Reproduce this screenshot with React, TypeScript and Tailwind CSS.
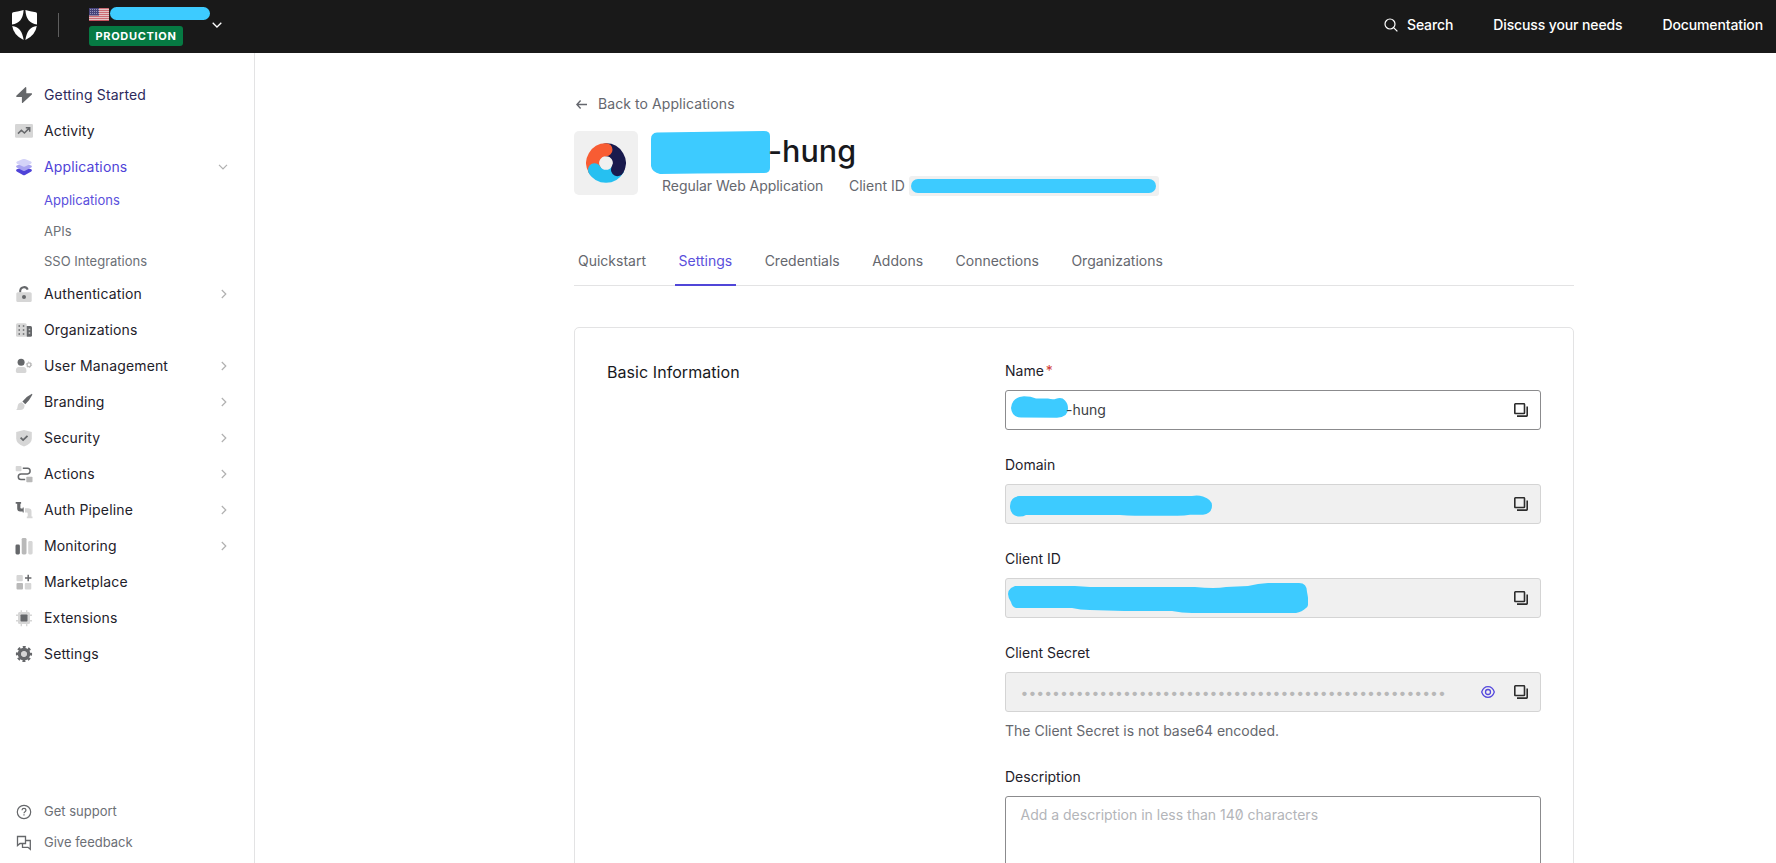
import React from "react";

type IconName =
  | "bolt" | "activity" | "layers" | "lock" | "org" | "user" | "brush" | "shield"
  | "actions" | "pipe" | "bars" | "market" | "chip" | "gear";

const D = "#65676a";
const L = "#d6d6d6";
const M = "#b9b9b9";

const glyphs: Record<IconName, React.ReactNode> = {
  bolt: (
    <path d="M10.300 1.300 1.300 9.700Q.7 10.900 2 10.900h4.900v5.500q.2.900 1 .4l9-8.400q.6-1.200-.6-1.200h-5V1.700q-.2-.900-1-.4z" fill={D} />
  ),
  activity: (
    <>
      <rect x="0" y="2" width="18" height="13.700" rx="1.300" fill={L} />
      <path d="M3 11.600 6.400 8.200 9.400 11 14 6.400M10.800 5.800h3.900v3.900" fill="none" stroke={D} strokeWidth="1.500" />
    </>
  ),
  layers: (
    <>
      <path d="M1.700 11.300 9 9l7.300 2.300q1.400 1 0 2.200L10 16.900q-1 .5-2 0l-6.300-3.400q-1.400-1.200 0-2.200z" fill="#4f43d8" />
      <path d="M1.700 7.400 9 5l7.300 2.400q1.400 1 0 2.100L10 12.700q-1 .5-2 0L1.700 9.500q-1.400-1.100 0-2.100z" fill="#a9a4f0" />
      <path d="M2 3.500 8 1.100q1-.4 2 0l6 2.400q1.600 1 0 2.200L10 8.600q-1 .5-2 0L2 5.700q-1.600-1.200 0-2.200z" fill="#d4d3f8" />
    </>
  ),
  lock: (
    <>
      <path d="M5.200 7.500V5.600a3.900 3.900 0 0 1 7.500-1" fill="none" stroke={D} strokeWidth="2" />
      <rect x="1.300" y="7.300" width="15.400" height="9.700" rx="1.500" fill={L} />
      <circle cx="9" cy="12" r="2" fill={D} />
    </>
  ),
  org: (
    <>
      <rect x="1" y="2.300" width="10.700" height="13.500" rx="1.500" fill={L} />
      <path d="M3.500 5h1.500M7.800 5h1.500M3.500 9h1.500M7.800 9h1.500M3.500 13h1.500M7.800 13h1.500" stroke={D} strokeWidth="1.400" />
      <path d="M11.700 5h3.800q1.500 0 1.500 1.500v7.800q0 1.500-1.500 1.500h-3.800z" fill={D} />
      <path d="M13.700 8.500h1.500M13.700 12h1.500" stroke="#ccc" strokeWidth="1.400" />
    </>
  ),
  user: (
    <>
      <circle cx="6.100" cy="5.300" r="3.500" fill={D} />
      <path d="M.9 13.500q0-3.500 3-3.500h4.500q3 0 3 3.500v1q0 1.400-1.400 1.400H2.300Q.9 15.900.9 14.500z" fill={L} />
      <circle cx="14" cy="7.700" r="1.900" fill="none" stroke={M} strokeWidth="1.300" />
      <circle cx="14" cy="7.700" r="2.700" fill="none" stroke={M} strokeWidth="1" strokeDasharray="1.200 1.620" />
    </>
  ),
  brush: (
    <>
      <path d="M16.900.8q.7.300.3 1.300-2.400 5-6.900 9.200L7.400 8.500Q11.800 3.200 16.900.8z" fill={D} />
      <path d="M6.700 9.200 9.600 12q.2 5-4.500 5H1q1.500-1 1.600-3.500.3-4 4.100-4.300z" fill={L} />
    </>
  ),
  shield: (
    <>
      <path d="M9 .9 16.800 3v6.500q0 5.500-7.800 7.900-7.800-2.400-7.800-7.900V3z" fill={L} />
      <path d="m5.600 8.700 2.500 2.400 4.400-4.300" fill="none" stroke={D} strokeWidth="1.800" />
    </>
  ),
  actions: (
    <>
      <rect x=".7" y="1" width="5.800" height="5.300" rx=".8" fill={L} />
      <path d="M7.800 3.300h4.700q2.600.1 2.600 2.800t-2.600 2.800H6q-2.700.1-2.700 2.900t2.700 2.800h4.200" fill="none" stroke={D} strokeWidth="1.500" />
      <rect x="11.300" y="11.700" width="6.200" height="5.600" rx=".8" fill={M} />
    </>
  ),
  pipe: (
    <>
      <path d="M.7 1h5.400v1.700h-.7v4q0 .7.700.7h1.600v-.9h1v5h-1v-1H5.200q-3 0-3-3V2.700H.7z" fill={D} />
      <path d="M10 7.300h3.200q3.300 0 3.300 3.300v5h1v1.600h-5.700v-1.600h.9v-3.200q0-.8-.8-.8H10z" fill={L} />
    </>
  ),
  bars: (
    <>
      <rect x=".5" y="7.600" width="4.400" height="9.800" rx="1.400" fill={D} />
      <rect x="6.700" y=".9" width="4.800" height="16.500" rx="1.400" fill={M} />
      <rect x="13.200" y="4" width="4.400" height="13.400" rx="1.400" fill={L} />
    </>
  ),
  market: (
    <>
      <rect x="1.500" y="2" width="6.300" height="6.300" rx="1" fill={L} />
      <rect x="1.500" y="9.900" width="6.500" height="6.500" rx="1" fill={M} />
      <rect x="9.800" y="9.900" width="6.500" height="6.500" rx="1" fill={L} />
      <path d="M13.200 1.800v6.400M10 5h6.400" stroke={D} strokeWidth="1.500" />
    </>
  ),
  chip: (
    <>
      <path d="M6.300 1.200v16M11.700 1.200v16M1 6.200h16M1 11.700h16" stroke={L} strokeWidth="1.400" />
      <rect x="3" y="3" width="12" height="12" rx="1.500" fill={L} />
      <rect x="5.500" y="5.500" width="7" height="7" rx=".8" fill={D} />
    </>
  ),
  gear: (
    <>
      <circle cx="9" cy="9" r="4.500" fill="none" stroke={D} strokeWidth="3.600" />
      <circle cx="9" cy="9" r="7" fill="none" stroke={D} strokeWidth="2.200" strokeDasharray="2.900 2.598" strokeDashoffset="1.450" />
      <circle cx="9" cy="9" r="2.800" fill={L} />
    </>
  ),
};

const Chevron = () => (
  <svg className="h-[10px] w-[6px]" viewBox="0 0 6 10" fill="none" stroke="#b0b0b0" strokeWidth="1.200">
    <path d="m.8 1 4 4-4 4" />
  </svg>
);

const NavItem = ({ icon, label, more, tone = "text-[#1e212a]" }: { icon: IconName; label: string; more?: boolean; tone?: string }) => (
  <a className={`flex h-9 items-center pr-[27px] pl-[15px] text-[14px] tracking-[0.15px] ${tone}`}>
    <svg className="mr-[11px] size-[18px] shrink-0" viewBox="0 0 18 18">{glyphs[icon]}</svg>
    <span className="grow pb-px">{label}</span>
    {more && <Chevron />}
  </a>
);

const CopyIcon = () => (
  <svg className="size-[14px]" viewBox="0 0 14 14" fill="none" stroke="#2c2c2c" strokeWidth="1.600">
    <rect x=".8" y=".8" width="9.700" height="9.700" rx=".6" />
    <path d="M13.200 3.500v9q0 .6-.6.600H3" />
  </svg>
);

const Eye = () => (
  <svg className="mr-[19px] h-[14px] w-[14px]" viewBox="0 0 14 14" fill="none" stroke="#5549dd" strokeWidth="1.300">
    <path d="M.7 7Q2.500 1.700 7 1.700T13.300 7Q11.500 12.300 7 12.300T.7 7z" />
    <circle cx="7" cy="7" r="2.500" />
  </svg>
);

const Field = ({ label, required, disabled, eye, children }: { label: string; required?: boolean; disabled?: boolean; eye?: boolean; children: React.ReactNode }) => (
  <div className="mb-[25px]">
    <div className="flex h-5 items-center gap-[2px] text-[14px] leading-5 text-[#1e212a]">
      {label}
      {required && <span className="text-[#d03c38]">*</span>}
    </div>
    <div className={`mt-[9px] flex h-[40px] items-center rounded-[3px] border pr-[12px] ${disabled ? "border-[#d4d4d4] bg-[#f0f0f0]" : "border-[#8b8b8d] bg-white"}`}>
      <div className="flex h-full grow items-center">{children}</div>
      {eye && <Eye />}
      <CopyIcon />
    </div>
  </div>
);

const tabs = ["Quickstart", "Settings", "Credentials", "Addons", "Connections", "Organizations"];

export default function App() {
  return (
    <div className="flex h-[863px] w-[1776px] flex-col overflow-hidden bg-white font-['Inter','Liberation_Sans',sans-serif] text-[14px]">
      <header className="flex h-[53px] shrink-0 items-center bg-[#191919] pr-[13px] text-white">
        <svg className="mt-[-3px] ml-[12px] h-[30px] w-[25px]" viewBox="0 0 25 30" fill="#fff">
          <path d="M11.600 0Q11 13 0 14.500V3.700Q0 2.500 1.200 2.200 7 1.300 11.600 0z" />
          <path d="M13.400 0Q14 13 25 14.500V3.700q0-1.200-1.200-1.500Q18 1.300 13.400 0z" />
          <path d="M.2 15.900Q10 17 11.600 30 1.500 25 .2 15.900z" />
          <path d="M24.800 15.900Q15 17 13.400 30q10.100-5 11.400-14.100z" />
        </svg>
        <div className="mt-[-4px] ml-[21px] h-6 w-px bg-[#5e5e5e]" />
        <div className="ml-[30px] flex h-[39px] flex-col justify-between">
          <div className="flex h-[13px] items-start">
            <svg className="mt-px h-[13px] w-[20px]" viewBox="0 0 20 13">
              <rect width="20" height="13" rx="1" fill="#e9dede" />
              <path d="M0 .7h20M0 2.700h20M0 4.700h20M0 6.700h20M0 8.700h20M0 10.700h20M0 12.500h20" stroke="#c4525c" strokeWidth="1" />
              <rect width="10" height="7.500" fill="#46437a" />
              <path d="M1 1.500h9M1 3.500h9M1 5.500h9" stroke="#a9a8c8" strokeWidth=".8" strokeDasharray="1 1" />
            </svg>
            <div className="ml-px h-[13px] w-[100px] rounded-full bg-[#3dcbff]" />
          </div>
          <div className="flex h-5 w-[94px] items-center justify-center rounded-[3px] bg-[#067a43] text-[11px] font-bold tracking-[0.700px]">PRODUCTION</div>
        </div>
        <svg className="mt-[-3px] ml-[2px] h-[6px] w-[10px]" viewBox="0 0 10 6" fill="none" stroke="#fff" strokeWidth="1.300">
          <path d="m.7.700 4.300 4.300L9.300.700" />
        </svg>
        <nav className="mt-[-4px] ml-auto flex items-center gap-[40px] text-[14px] font-medium tracking-[-0.120px]">
          <span className="flex items-center gap-[9px]">
            <svg className="size-[14px]" viewBox="0 0 14 14" fill="none" stroke="#fff" strokeWidth="1.200">
              <circle cx="6" cy="6" r="5" />
              <path d="m9.600 9.600 3.800 3.800" />
            </svg>
            Search
          </span>
          <span>Discuss your needs</span>
          <span>Documentation</span>
        </nav>
      </header>
      <div className="flex min-h-0 grow">
        <aside className="flex w-[255px] shrink-0 flex-col border-r border-[#e3e3e4] pt-[24px]">
          <NavItem icon="bolt" label="Getting Started" tone="text-[#2d2a5c]" />
          <NavItem icon="activity" label="Activity" />
          <div className="flex h-9 items-center pr-[26px] pl-[15px] text-[14px] tracking-[0.15px] text-[#4f43d8]">
            <svg className="mr-[11px] size-[18px]" viewBox="0 0 18 18">{glyphs.layers}</svg>
            <span className="grow pb-px">Applications</span>
            <svg className="h-[6px] w-[10px]" viewBox="0 0 10 6" fill="none" stroke="#b0b0b0" strokeWidth="1.200">
              <path d="m1 .8 4 4 4-4" />
            </svg>
          </div>
          <div className="flex h-[91px] flex-col pt-px pl-[44px] text-[13px] text-[#6c6f76]">
            <span className="flex h-[30px] shrink-0 items-center text-[#5a4fdc]">Applications</span>
            <span className="flex h-[31px] shrink-0 items-center">APIs</span>
            <span className="flex h-[30px] shrink-0 items-center">SSO Integrations</span>
          </div>
          <NavItem icon="lock" label="Authentication" more />
          <NavItem icon="org" label="Organizations" />
          <NavItem icon="user" label="User Management" more />
          <NavItem icon="brush" label="Branding" more />
          <NavItem icon="shield" label="Security" more />
          <NavItem icon="actions" label="Actions" more />
          <NavItem icon="pipe" label="Auth Pipeline" more />
          <NavItem icon="bars" label="Monitoring" more />
          <NavItem icon="market" label="Marketplace" />
          <NavItem icon="chip" label="Extensions" />
          <NavItem icon="gear" label="Settings" />
          <div className="mt-auto mb-[5px] flex flex-col pl-[16px] text-[13px] text-[#6c6f76]">
            <span className="flex h-[31px] items-center gap-[12px]">
              <svg className="size-4" viewBox="0 0 16 16" fill="none" stroke="#65676a" strokeWidth="1.200">
                <circle cx="8" cy="8" r="6.700" />
                <path d="M6 6.300q.1-1.900 2-1.900t2 1.700q0 1-1 1.600T8 9.300M8 10.300v1.300" />
              </svg>
              Get support
            </span>
            <span className="flex h-[31px] items-center gap-[12px]">
              <svg className="size-4" viewBox="0 0 16 16" fill="none" stroke="#65676a" strokeWidth="1.300">
                <path d="M1.500 1.500h8v7H4L1.500 10.600z" />
                <path d="M9.500 5.500h4.800v8.800L12 12.300H6.500V8.600" />
              </svg>
              Give feedback
            </span>
          </div>
        </aside>
        <main className="min-w-0 grow pt-[41px] pl-[319px]">
          <div className="w-[1000px]">
            <div className="flex h-5 items-center text-[14px] tracking-[0.080px] text-[#65676e]">
              <svg className="mr-[11px] ml-[2px] h-[9px] w-[11px]" viewBox="0 0 11 9" fill="none" stroke="#65676e" strokeWidth="1.400">
                <path d="M11 4.500H1M4.600.600.900 4.500l3.700 3.900" />
              </svg>
              <span className="pb-px">Back to Applications</span>
            </div>
            <div className="mt-[17px] flex h-[64px]">
              <div className="flex size-[64px] items-center justify-center rounded-[5px] bg-[#f0f0f0]">
                <svg className="size-10" viewBox="0 0 40 40" fill="none" strokeWidth="13" strokeLinecap="round">
                  <path d="M20 6.700A13.300 13.300 0 0 1 31.500 26.700" stroke="#191a4d" />
                  <path d="M31.500 26.700A13.300 13.300 0 0 1 8.500 26.700" stroke="#26c0f1" />
                  <path d="M8.500 26.700A13.300 13.300 0 0 1 20 6.700" stroke="#f85c33" />
                  <path d="M31.500 26.700A13.300 13.300 0 0 0 32.500 24" stroke="#191a4d" />
                  <path d="M8.500 26.700A13.300 13.300 0 0 0 9.500 28.200" stroke="#26c0f1" />
                </svg>
              </div>
              <div className="ml-[13px]">
                <div className="mt-[-1px] flex h-[44px] items-start">
                  <svg className="mt-px h-[43px] w-[119px] shrink-0" viewBox="0 0 119 43">
                    <path d="M6 1.500 113 0q6 0 6 5v32q0 5-6 5l-66 .5L9 43Q1 41 0 35V8Q0 2 6 1.500z" fill="#3dcbff" />
                  </svg>
                  <span className="ml-[-2px] pt-px text-[30.500px] leading-[40px] font-medium text-[#18191d]">-hung</span>
                </div>
                <div className="mt-[2px] ml-[11px] flex h-5 items-center text-[14px] text-[#65676e]">
                  <span className="w-[187px] pb-px tracking-[-0.040px]">Regular Web Application</span>
                  <span className="w-[60px] pb-px">Client ID</span>
                  <span className="flex h-5 w-[250px] items-center rounded-[3px] bg-[#f0f0f0] pl-[2px]">
                    <span className="h-[14px] w-[245px] rounded-full bg-[#3dcbff]" />
                  </span>
                </div>
              </div>
            </div>
            <div className="mt-[42px] flex h-[49px] gap-[24.500px] border-b border-[#e3e3e4]">
              {tabs.map((t) => (
                <div key={t} className={`flex h-[49px] border-b-2 px-[4px] pt-[14px] leading-5 ${t === "Settings" ? "border-[#5046d8] text-[#5a4fdc]" : "border-transparent text-[#65676e]"}`}>
                  {t}
                </div>
              ))}
            </div>
            <section className="mt-[41px] flex h-[600px] justify-between rounded-[5px] border border-[#e3e3e4] pt-[33px] pr-[32px] pl-[32px]">
              <h2 className="mt-[-1px] text-[16px] leading-6 tracking-[0.060px] text-[#18191d]">Basic Information</h2>
              <div className="w-[536px]">
                <Field label="Name" required>
                  <svg className="mb-[6px] ml-[5px] h-[22px] w-[57px]" viewBox="0 0 57 22">
                    <path d="M0 12Q1 1 13 .3q7 0 12 2.200h12q5 1.500 8 .2 6-2 9 1.800 3 3 3 8 0 9-11 9.200l-35-.2Q1 22 0 12z" fill="#3dcbff" />
                  </svg>
                  <span className="ml-[-2px] pb-[2px] text-[#3c3e44]">-hung</span>
                </Field>
                <Field label="Domain" disabled>
                  <svg className="mt-[4px] ml-[4px] h-[22px] w-[202px]" viewBox="0 0 202 22">
                    <path d="M9 1h173q6-1 11 .5 9 3 9 9 0 8-9 9.200h-13q-6 1.300-15 1.100h-40q-8-.2-15-.9H16Q13 22 8 21.500 0 20 0 11 0 2 9 1z" fill="#3dcbff" />
                  </svg>
                </Field>
                <Field label="Client ID" disabled>
                  <svg className="mt-px ml-[2px] h-[31px] w-[300px]" viewBox="0 0 300 31">
                    <path d="M7 3h60l15 1h105q20 2 31 0l22-1q10-2.500 20-3h31q8 0 8 9 3 14-1 16-4 4-10 5H184q-10 0-20-2h-48l-34-1q-10 0-18-2H42L8 25Q4 24 3 19q-6-9 0-14z" fill="#3dcbff" />
                  </svg>
                </Field>
                <Field label="Client Secret" disabled eye>
                  <span className="ml-[14.500px] text-[14px] text-[#b8b8b8]">{"•".repeat(54)}</span>
                </Field>
                <div className="mt-[-16px] h-5 leading-5 text-[#65676e]">The Client Secret is not base64 encoded.</div>
                <div className="mt-[26px] h-5 leading-5 text-[#1e212a]">Description</div>
                <div className="mt-[9px] h-[100px] rounded-[3px] border border-[#8b8b8d] px-[14.500px] pt-[8px] leading-5 text-[#b3b5b9] [font-feature-settings:'zero']">
                  Add a description in less than 140 characters
                </div>
              </div>
            </section>
          </div>
        </main>
      </div>
    </div>
  );
}
